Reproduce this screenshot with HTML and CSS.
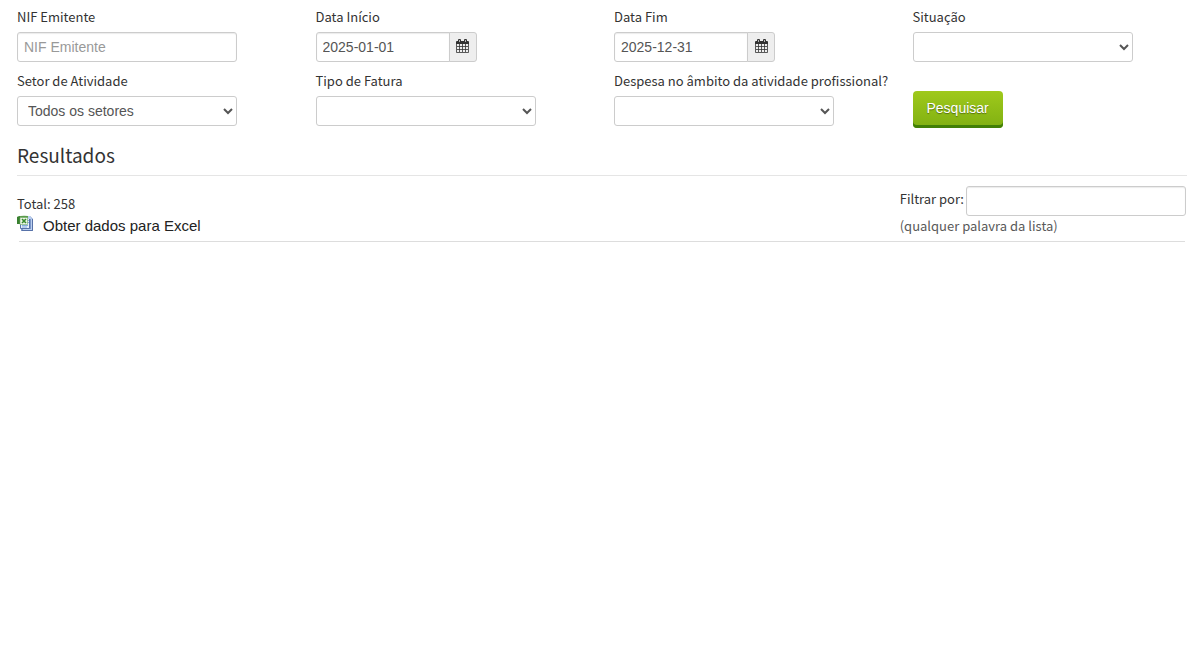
FILE: index.html
```html
<!DOCTYPE html>
<html lang="pt">
<head>
    <meta charset="UTF-8">
    <meta name="viewport" content="width=device-width, initial-scale=1.0">
    <title>Faturas</title>
    <link rel="stylesheet" href="styles.css">
</head>
<body>
    <!-- Calendar glyph shared by both date fields -->
    <svg class="sprite" aria-hidden="true">
        <symbol id="calendar" viewBox="0 0 13 14">
            <path d="M0 3q0-1 1-1h11q1 0 1 1v2H0z"/>
            <path d="M2 1q0-1 1-1h1q1 0 1 1v3H2zM8 1q0-1 1-1h1q1 0 1 1v3H8z"/>
            <path d="M3.500 1v2M9.500 1v2" fill="none" stroke="#eee" stroke-width=".7"/>
            <path d="M.5 5v8.500h12V5M3.500 5v8M6.500 5v8M9.500 5v8M1 7.500h11M1 10.500h11" fill="none" stroke="currentColor" stroke-width=".8"/>
        </symbol>
    </svg>

    <form class="search-form" onsubmit="return false">
        <div class="field">
            <label for="nifEmitente">NIF Emitente</label>
            <input type="text" id="nifEmitente" class="control" placeholder="NIF Emitente">
        </div>
        <div class="field">
            <label for="dataInicio">Data Início</label>
            <div class="input-append">
                <input type="text" id="dataInicio" class="control" value="2025-01-01">
                <button type="button" class="add-on" aria-label="Escolher data de início"><svg><use href="#calendar"/></svg></button>
            </div>
        </div>
        <div class="field">
            <label for="dataFim">Data Fim</label>
            <div class="input-append">
                <input type="text" id="dataFim" class="control" value="2025-12-31">
                <button type="button" class="add-on" aria-label="Escolher data de fim"><svg><use href="#calendar"/></svg></button>
            </div>
        </div>
        <div class="field">
            <label for="situacao">Situação</label>
            <select id="situacao" class="control"><option></option></select>
        </div>
        <div class="field">
            <label for="setor">Setor de Atividade</label>
            <select id="setor" class="control"><option>Todos os setores</option></select>
        </div>
        <div class="field">
            <label for="tipoFatura">Tipo de Fatura</label>
            <select id="tipoFatura" class="control"><option></option></select>
        </div>
        <div class="field">
            <label for="despesa">Despesa no âmbito da atividade profissional?</label>
            <select id="despesa" class="control"><option></option></select>
        </div>
        <div class="field field-submit">
            <button type="submit" class="btn-search">Pesquisar</button>
        </div>
    </form>

    <h1>Resultados</h1>

    <div class="results-bar">
        <div class="summary">
            <p>Total: 258</p>
            <a href="#" class="export">
                <svg viewBox="0 0 16 16" aria-hidden="true">
                    <path d="M6 1h7l3 3v12H4V8z" fill="#7b96c8"/>
                    <path d="M6 1h5l2 2v10H4V8z" fill="#e6effc"/>
                    <path d="M11 1v3h3v10H6v1h9V4l-2-3z" fill="#bcd0f0"/>
                    <path d="M3.500 9v4.500h9V4M5 15.500h10.500V4" fill="none" stroke="#5872a8"/>
                    <path d="M10 5.500h2M10 7.500h2M5 10.500h6M5 12h5" stroke="#86acdf"/>
                    <path d="M0 2q5-2 11-1v2H3v6H0z" fill="#5b9c4c"/>
                    <path d="M0 2l3-1v8H0z" fill="#398030"/>
                    <path d="M3 2.500h7.500v7H3z" fill="#edf5e8" stroke="#6daa5f" stroke-width=".6"/>
                    <path d="M5 4l4 4M9 4L5 8" stroke="#388a2c" stroke-width="1.600"/>
                </svg>
                <span>Obter dados para Excel</span>
            </a>
        </div>
        <div class="filter">
            <div class="filter-row">
                <label for="filtro">Filtrar por:</label>
                <input type="text" id="filtro" class="control">
            </div>
            <p class="help">(qualquer palavra da lista)</p>
        </div>
    </div>
</body>
</html>
```
FILE: styles.css
```css
* {
    box-sizing: border-box;
}

body {
    margin: 0;
    padding: 7px 8px 20px 17px;
    background: #fff;
    color: #333;
    font-family: "Noto Sans CJK SC", "Open Sans", sans-serif;
    font-size: 13px;
    line-height: 20px;
}

p {
    margin: 0;
}

.sprite {
    position: absolute;
    width: 0;
    height: 0;
}

/* Search form */
.search-form {
    display: grid;
    grid-template-columns: repeat(4, minmax(0, 1fr));
    column-gap: 24px;
    row-gap: 9px;
}

.field label {
    display: block;
    margin-bottom: 5px;
    white-space: nowrap;
}

.control {
    display: block;
    width: 220px;
    max-width: 100%;
    height: 30px;
    padding: 4px 6px;
    border: 1px solid #ccc;
    border-radius: 3px;
    background: #fff;
    color: #555;
    font-family: "Liberation Sans", Arial, sans-serif;
    font-size: 14px;
    line-height: 20px;
}

input.control {
    box-shadow: inset 0 1px 1px rgba(0, 0, 0, 0.08);
}

.control::placeholder {
    color: #999;
}

.input-append {
    display: flex;
}

.input-append .control {
    width: 134px;
    border-radius: 3px 0 0 3px;
}

.add-on {
    display: flex;
    justify-content: center;
    width: 28px;
    height: 30px;
    margin-left: -1px;
    padding: 6px 0 0;
    border: 1px solid #ccc;
    border-radius: 0 3px 3px 0;
    background: #eee;
    color: #333;
    cursor: pointer;
}

.add-on svg {
    width: 13px;
    height: 14px;
    fill: currentColor;
}

.field-submit {
    padding-top: 20px;
}

.btn-search {
    display: block;
    height: 37px;
    padding: 0 14px 3px;
    border: 0;
    border-radius: 4px;
    background: linear-gradient(#9fc91b, #80b012);
    box-shadow: inset 0 -3px 0 #417f06;
    color: #fff;
    font-family: "Liberation Sans", Arial, sans-serif;
    font-size: 14px;
    line-height: 20px;
    text-shadow: 0 1px 1px rgba(0, 0, 0, 0.4);
    cursor: pointer;
}

/* Results */
h1 {
    margin: 7px 0 10px;
    border-bottom: 1px solid #e5e5e5;
    font-size: 19px;
    font-weight: 400;
    line-height: 40px;
}

.results-bar {
    display: flex;
    justify-content: space-between;
    margin: 0 2px;
    border-bottom: 1px solid #ddd;
}

.summary {
    margin-left: -2px;
    padding-top: 8px;
}

.export {
    display: flex;
    gap: 10px;
    color: #222;
    font-family: "Liberation Sans", Arial, sans-serif;
    font-size: 15px;
    line-height: 24px;
    text-decoration: none;
}

.export svg {
    width: 16px;
    height: 16px;
    margin-top: 1px;
}

.filter {
    margin-right: -1px;
    padding-bottom: 5px;
}

.filter-row {
    display: flex;
    gap: 2px;
}

.filter-row label {
    padding-top: 3px;
}

.help {
    color: #595959;
}
```
